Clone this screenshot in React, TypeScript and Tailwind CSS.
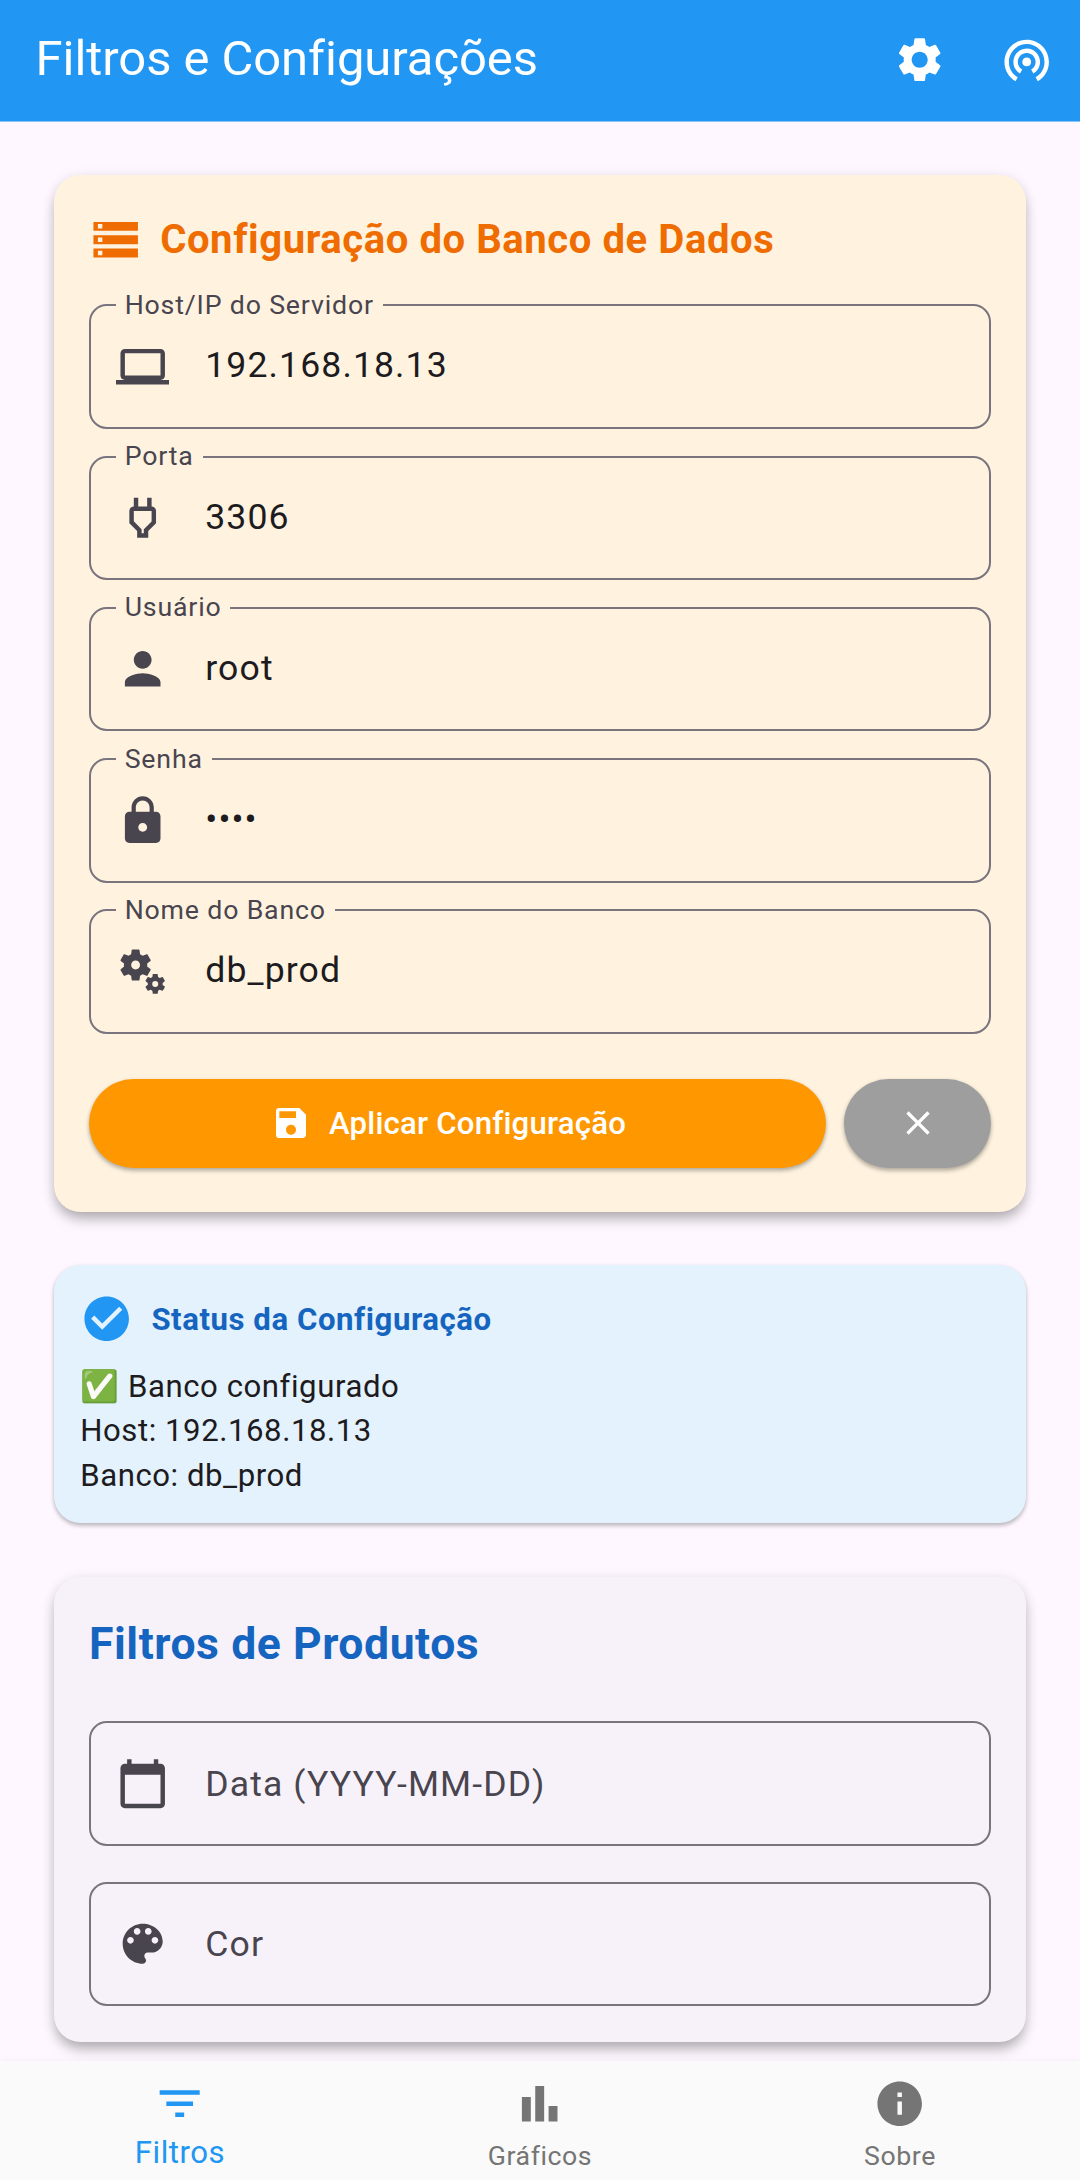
import React from "react";
import type { ComponentType } from "react";
import {
  MdBarChart,
  MdCalendarToday,
  MdCheckCircle,
  MdClose,
  MdFilterList,
  MdInfo,
  MdLaptop,
  MdLock,
  MdMiscellaneousServices,
  MdOutlinePower,
  MdPerson,
  MdSave,
  MdSettings,
  MdStorage,
  MdWifiTethering,
} from "react-icons/md";

const ICON = "size-[53.4px] shrink-0";

type IconProps = { className?: string };

function PaletteIcon({ className }: IconProps) {
  return (
    <svg viewBox="0 0 24 24" fill="currentColor" className={className}>
      <path d="M12 3c-4.97 0-9 4.03-9 9s4.03 9 9 9c.83 0 1.5-.67 1.5-1.5 0-.39-.15-.74-.39-1.01-.23-.26-.38-.61-.38-.99 0-.83.67-1.5 1.5-1.5H16c2.76 0 5-2.24 5-5 0-4.42-4.03-8-9-8zm-5.5 9c-.83 0-1.5-.67-1.5-1.5S5.67 9 6.5 9 8 9.67 8 10.5 7.33 12 6.5 12zm3-4C8.67 8 8 7.33 8 6.5S8.67 5 9.5 5s1.5.67 1.5 1.5S10.33 8 9.5 8zm5 0c-.83 0-1.5-.67-1.5-1.5S13.67 5 14.5 5s1.5.67 1.5 1.5S15.33 8 14.5 8zm3 4c-.83 0-1.5-.67-1.5-1.5S16.67 9 17.5 9s1.5.67 1.5 1.5-.67 1.5-1.5 1.5z" />
    </svg>
  );
}

function OutlinedField({
  icon: Icon,
  label,
  value,
  placeholder,
}: {
  icon: ComponentType<IconProps>;
  label?: string;
  value?: string;
  placeholder?: string;
}) {
  return (
    <div className="relative flex h-[124.6px] items-center rounded-[17.8px] border-2 border-[#79747e] pl-[24.9px] text-[#49454f]">
      {label && (
        <span className="absolute -top-[17.6px] left-[24.8px] bg-[#fff3e0] px-[8.9px] text-[26.7px] leading-[32px] tracking-[0.83px]">
          {label}
        </span>
      )}
      <Icon className={ICON} />
      {value && (
        <span className="ml-[36px] pb-[1.5px] text-[35.6px] leading-[53px] tracking-[1.11px] text-[#1d1b20]">
          {value}
        </span>
      )}
      {placeholder && (
        <span className="ml-[36px] pt-px text-[35.6px] leading-[53px] tracking-[1.11px]">
          {placeholder}
        </span>
      )}
    </div>
  );
}

const dbFields = [
  { icon: MdLaptop, label: "Host/IP do Servidor", value: "192.168.18.13" },
  { icon: MdOutlinePower, label: "Porta", value: "3306" },
  { icon: MdPerson, label: "Usuário", value: "root" },
  { icon: MdLock, label: "Senha", value: "••••" },
  { icon: MdMiscellaneousServices, label: "Nome do Banco", value: "db_prod" },
];

function DatabaseCard() {
  return (
    <section className="h-[1037px] shrink-0 rounded-[26.7px] bg-[#fff3e0] px-[35.2px] pt-[38px] shadow-[0_9px_13px_-2px_rgba(0,0,0,0.26),0_2px_13px_rgba(0,0,0,0.1)]">
      <div className="flex h-[53.4px] items-center gap-[17.8px] text-[#ef6c00]">
        <MdStorage className={ICON} />
        <h2 className="pt-[1.5px] text-[40.05px] leading-[54px] font-bold tracking-[0.57px]">
          Configuração do Banco de Dados
        </h2>
      </div>
      <div className="mt-[37.9px] flex flex-col gap-[26.7px]">
        {dbFields.map((f) => (
          <OutlinedField key={f.label} {...f} />
        ))}
      </div>
      <div className="mt-[44.7px] flex h-[89px] gap-[17.8px] text-white">
        <button className="flex w-[737px] items-center justify-center gap-[17.8px] rounded-full bg-[#ff9800] pr-[17.8px] shadow-[0_3px_4px_rgba(0,0,0,0.24),0_1px_4px_rgba(0,0,0,0.1)]">
          <MdSave className="size-[40px]" />
          <span className="pt-[1.5px] text-[31.15px] leading-[44.5px] font-medium tracking-[0.2225px]">
            Aplicar Configuração
          </span>
        </button>
        <button className="flex flex-1 items-center justify-center rounded-full bg-[#9e9e9e] pl-px shadow-[0_3px_4px_rgba(0,0,0,0.24),0_1px_4px_rgba(0,0,0,0.1)]">
          <MdClose className="size-[40px]" />
        </button>
      </div>
    </section>
  );
}

function StatusCard() {
  return (
    <section className="mt-[53.4px] h-[258px] shrink-0 rounded-[26.7px] bg-[#e3f2fd] px-[26.4px] pt-[26.5px] shadow-[0_3px_4px_rgba(0,0,0,0.2),0_1px_4px_rgba(0,0,0,0.1)]">
      <div className="flex h-[53.4px] items-center gap-[17.8px]">
        <MdCheckCircle className="size-[53.4px] text-[#2196f3]" />
        <h3 className="pt-[3px] text-[31.15px] leading-[44.5px] font-bold tracking-[0.556px] text-[#1565c0]">
          Status da Configuração
        </h3>
      </div>
      <div className="mt-[19.3px] text-[31.15px] leading-[44.5px] tracking-[0.556px] text-[#1d1b20]">
        <p>✅ Banco configurado</p>
        <p>Host: 192.168.18.13</p>
        <p>Banco: db_prod</p>
      </div>
    </section>
  );
}

function ProductFiltersCard() {
  return (
    <section className="mt-[53.4px] h-[465.3px] shrink-0 rounded-[26.7px] bg-[#f7f2fa] px-[35.2px] pt-[37.1px] shadow-[0_9px_13px_-2px_rgba(0,0,0,0.26),0_2px_13px_rgba(0,0,0,0.1)]">
      <h2 className="text-[44.5px] leading-[60px] font-bold tracking-[0.556px] text-[#1565c0]">
        Filtros de Produtos
      </h2>
      <div className="mt-[47.5px] flex flex-col gap-[35.6px]">
        <OutlinedField icon={MdCalendarToday} placeholder="Data (YYYY-MM-DD)" />
        <OutlinedField icon={PaletteIcon} placeholder="Cor" />
      </div>
    </section>
  );
}

export default function App() {
  return (
    <div className="flex h-[2180px] w-[1080px] flex-col overflow-hidden bg-[#fef7ff] font-['Roboto',sans-serif]">
      <header className="flex h-[122px] shrink-0 items-center justify-between border-b border-[#83c4fa] bg-[#2196f3] pr-[26.7px] pb-[2.4px] pl-[35.6px] text-white">
        <h1 className="pb-px text-[48.95px] leading-[62px] tracking-[-0.05px]">
          Filtros e Configurações
        </h1>
        <div className="flex gap-[53.4px]">
          <MdSettings className={ICON} />
          <MdWifiTethering className={ICON} />
        </div>
      </header>

      <main className="flex flex-1 flex-col overflow-hidden px-[53.8px] pt-[53px]">
        <DatabaseCard />
        <StatusCard />
        <ProductFiltersCard />
      </main>

      <nav className="z-10 grid h-[119.3px] shrink-0 grid-cols-3 bg-[#fafafa] pt-[16px] tracking-[0.556px] text-[#757575] shadow-[0_-1px_6px_rgba(0,0,0,0.03)]">
        <div className="flex flex-col items-center text-[#2196f3]">
          <MdFilterList className={ICON} />
          <span className="mt-[5px] text-[31.15px] leading-[36px]">Filtros</span>
        </div>
        <div className="flex flex-col items-center">
          <MdBarChart className={ICON} />
          <span className="mt-[9.8px] text-[26.7px] leading-[32px]">Gráficos</span>
        </div>
        <div className="flex flex-col items-center">
          <MdInfo className={ICON} />
          <span className="mt-[9.8px] text-[26.7px] leading-[32px]">Sobre</span>
        </div>
      </nav>
    </div>
  );
}
